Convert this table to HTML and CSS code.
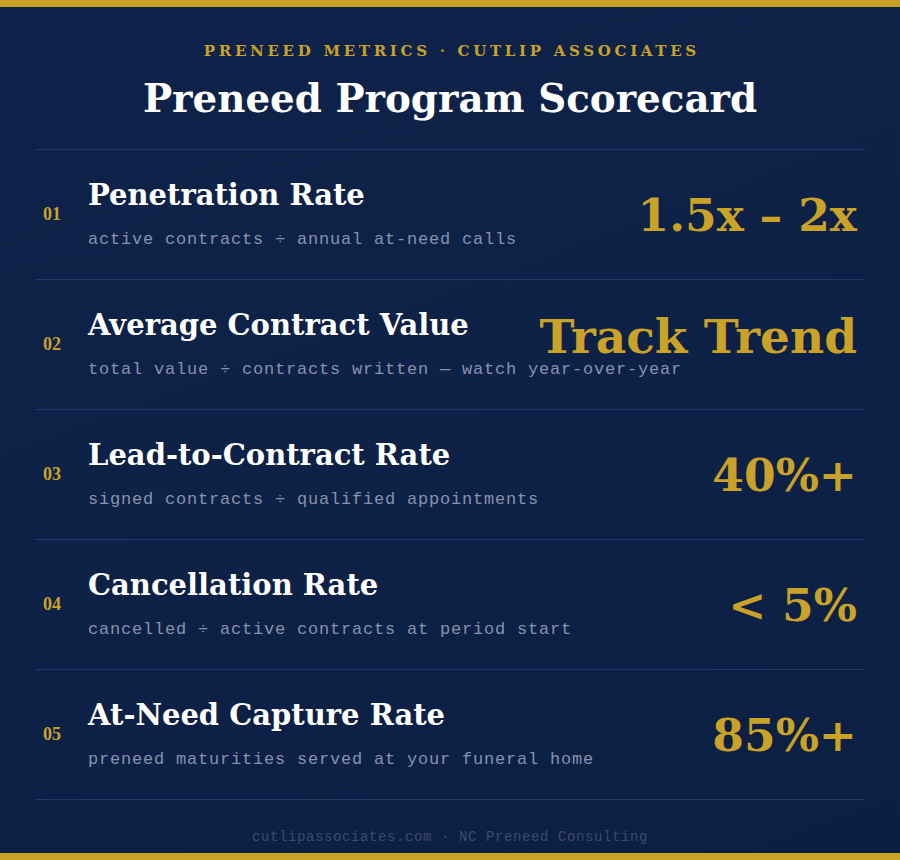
FILE: index.html
```html
<!DOCTYPE html>
<html lang="en">
<head>
<meta charset="utf-8">
<title>Preneed Program Scorecard</title>
<link rel="stylesheet" href="styles.css">
</head>
<body>
<div class="page">
  <header class="header">
    <div class="kicker">PRENEED METRICS · CUTLIP ASSOCIATES</div>
    <h1 class="title">Preneed Program Scorecard</h1>
  </header>
  <div class="list">
    <div class="row">
      <div class="num">01</div>
      <div class="main">
        <div class="name">Penetration Rate</div>
        <div class="desc">active contracts ÷ annual at-need calls</div>
      </div>
      <div class="value">1.5x – 2x</div>
    </div>
    <div class="row">
      <div class="num">02</div>
      <div class="main">
        <div class="name">Average Contract Value</div>
        <div class="desc">total value ÷ contracts written — watch year-over-year</div>
      </div>
      <div class="value value-lg">Track Trend</div>
    </div>
    <div class="row">
      <div class="num">03</div>
      <div class="main">
        <div class="name">Lead-to-Contract Rate</div>
        <div class="desc">signed contracts ÷ qualified appointments</div>
      </div>
      <div class="value">40%+</div>
    </div>
    <div class="row">
      <div class="num">04</div>
      <div class="main">
        <div class="name">Cancellation Rate</div>
        <div class="desc">cancelled ÷ active contracts at period start</div>
      </div>
      <div class="value">&lt; 5%</div>
    </div>
    <div class="row">
      <div class="num">05</div>
      <div class="main">
        <div class="name">At-Need Capture Rate</div>
        <div class="desc">preneed maturities served at your funeral home</div>
      </div>
      <div class="value">85%+</div>
    </div>
  </div>
  <footer class="footer">cutlipassociates.com · NC Preneed Consulting</footer>
</div>
</body>
</html>
```
FILE: styles.css
```css
html, body {
  margin: 0;
  padding: 0;
}
body {
  background: #0d2045;
}
.page {
  box-sizing: border-box;
  height: 860px;
  display: flex;
  flex-direction: column;
  border-top: 7px solid #c9a227;
  border-bottom: 7px solid #c9a227;
  background: linear-gradient(160deg, #0f234a 0%, #0c1f43 100%);
}
.header {
  text-align: center;
  padding-top: 34px;
}
.kicker {
  font-family: "DejaVu Serif", serif;
  font-weight: bold;
  font-size: 15px;
  line-height: 20px;
  letter-spacing: 3.7px;
  padding-left: 3.7px;
  color: #c9a227;
}
.title {
  margin: 15px 0 27px;
  font-family: "DejaVu Serif", serif;
  font-weight: bold;
  font-size: 38.8px;
  line-height: 46px;
  color: #ffffff;
}
.list {
  margin: 0 35px;
  border-top: 1px solid #1d3966;
}
.row {
  box-sizing: border-box;
  height: 130px;
  display: flex;
  align-items: center;
  padding: 0 8px;
  border-bottom: 1px solid #1d3966;
}
.num {
  flex: none;
  width: 45px;
  font-family: "Liberation Serif", serif;
  font-weight: bold;
  font-size: 18px;
  color: #c9a227;
}
.main {
  flex: 1;
  min-width: 0;
}
.name {
  font-family: "DejaVu Serif", serif;
  font-weight: bold;
  font-size: 29px;
  line-height: 34px;
  color: #ffffff;
  white-space: nowrap;
}
.desc {
  margin-top: 17px;
  font-family: "Liberation Mono", monospace;
  font-size: 17px;
  line-height: 22px;
  letter-spacing: 0.8px;
  color: #8593ad;
  white-space: nowrap;
}
.value {
  flex: none;
  position: relative;
  font-family: "DejaVu Serif", serif;
  font-weight: bold;
  font-size: 45.5px;
  line-height: 52px;
  color: #c9a227;
  white-space: nowrap;
}
.value-lg {
  font-size: 47px;
  margin-bottom: 16px;
}
.footer {
  flex: 1;
  padding-top: 28px;
  text-align: center;
  font-family: "Liberation Mono", monospace;
  font-size: 14px;
  line-height: 18px;
  letter-spacing: 0.6px;
  color: #3a4b6c;
}
```
